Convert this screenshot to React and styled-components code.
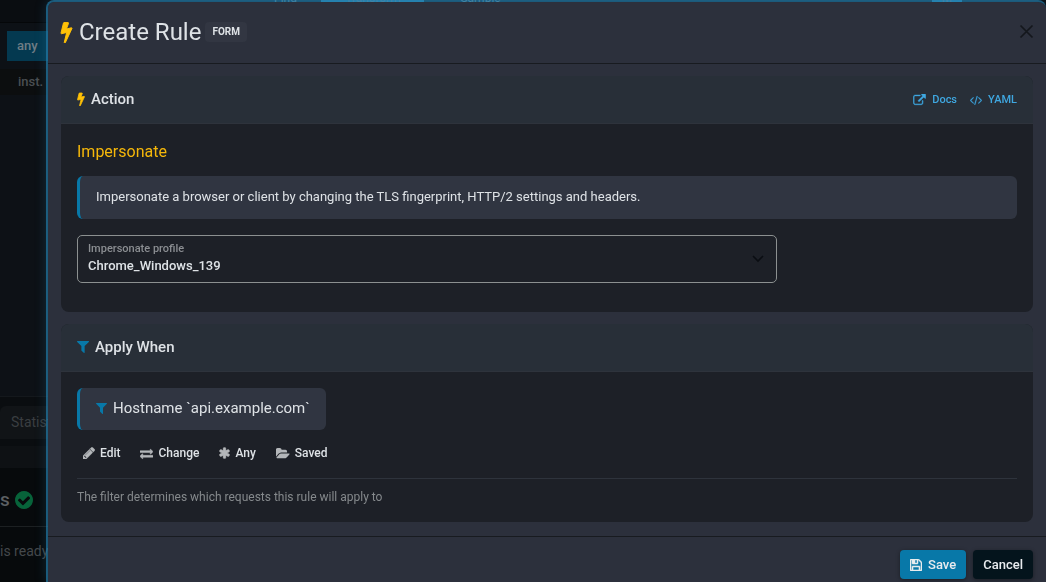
import styled, { createGlobalStyle } from "styled-components"

const GlobalStyle=createGlobalStyle`
  *{
    box-sizing:border-box;
  }
  body{
    margin:0;
    background:#0d1116;
    font-family:Roboto, "Liberation Sans", sans-serif;
    font-size:13px;
    line-height:20px;
    color:#dee2e6;
    overflow:hidden;
  }
  h1, h2, h3, p{
    margin:0;
    font-weight:500;
  }
`

/* page under the dialog */
const Page=styled.div`
  min-height:100vh;
  display:flex;
  flex-direction:column;
  background:#0d1116;
  color:#4a4e52;
  white-space:nowrap;
  overflow:hidden;
`
const TopBar=styled.div`
  height:23px;
  border-bottom:1px solid #050709;
  background:#0a0d11;
`
const Menu=styled.div`
  display:flex;
  gap:14px;
  padding:0 84px 0 264px;
  height:4px;
  align-items:flex-end;
  font-size:12px;
  line-height:12px;
  color:#8a949c;
`
const MenuItem=styled.span`
  padding:0 ${props=>props.px || '10px'};
  margin-left:${props=>props.end ? 'auto' : '0'};
  background:${props=>props.bg || 'transparent'};
  color:${props=>props.cl || 'inherit'};
`
const TabRow=styled.div`
  padding:8px 0 8px 7px;
  display:flex;
`
const Tab=styled.button`
  width:60px;
  height:30px;
  padding:0 10px;
  border:none;
  background:#043950;
  color:#6f7d85;
  font:500 13px/30px Roboto, sans-serif;
  text-align:left;
`
const SubRow=styled.div`
  height:26px;
  padding-left:18px;
  background:#0c0e0f;
  font-weight:500;
  line-height:26px;
`
const ListArea=styled.div`
  height:302px;
  border-bottom:1px solid #14181c;
`
const StatRow=styled.div`
  height:49px;
  padding:9px 0 7px;
  background:#0a0d10;
`
const StatTab=styled.div`
  height:33px;
  padding-left:11px;
  border-radius:6px 0 0 0;
  background:#111417;
  font-size:14px;
  line-height:33px;
  color:#3a3e41;
`
const Strip=styled.div`
  height:22px;
  background:#0e1114;
`
const DoneRow=styled.div`
  height:59px;
  padding-top:6px;
  display:flex;
  align-items:center;
  gap:5px;
  border-bottom:1px solid #1c2022;
  background:#070a0c;
  font-size:19px;
  font-weight:500;
  color:#5b5f62;
`
const Ready=styled.p`
  flex:1;
  padding-top:14px;
  background:#070a0c;
  font-size:14px;
  font-weight:400;
  color:#44484b;
`

/* dialog */
const Dialog=styled.div`
  position:fixed;
  top:0;
  left:46px;
  right:0;
  bottom:0;
  display:flex;
  flex-direction:column;
  border:2px solid rgba(36, 124, 168, 0.7);
  border-right:none;
  border-bottom:none;
  border-radius:8px 8px 0 0;
  background:#2c303c;
  background-clip:padding-box;
  box-shadow:0 0 12px rgba(36, 124, 168, 0.25);
`
const Header=styled.header`
  height:62px;
  flex:none;
  display:flex;
  align-items:center;
  gap:4px;
  padding:0 12px 2px;
  border-bottom:1px solid #181b20;
`
const Title=styled.h1`
  display:flex;
  align-items:center;
  gap:6px;
  font-size:24px;
  font-weight:400;
  line-height:32px;
`
const Badge=styled.span`
  padding:0 7px;
  border-radius:4px;
  background:#323642;
  font-size:10px;
  font-weight:700;
  line-height:20px;
`
const Close=styled.button`
  margin-left:auto;
  padding:0;
  border:none;
  background:none;
  color:#14171c;
  display:flex;
`
const Body=styled.main`
  flex:1;
  display:flex;
  flex-direction:column;
  gap:12px;
  padding:12px 13px 14px;
`
const Card=styled.section`
  border-radius:8px;
  background:#1d2027;
  overflow:hidden;
`
const CardHead=styled.div`
  height:48px;
  display:flex;
  align-items:center;
  justify-content:space-between;
  padding:0 16px;
  border-bottom:1px solid #2e333c;
  background:#282f38;
`
const CardTitle=styled.h2`
  display:flex;
  align-items:center;
  gap:6px;
  padding-bottom:2px;
  font-size:15px;
`
const Links=styled.nav`
  display:flex;
  gap:13px;
`
const DocLink=styled.a`
  display:flex;
  align-items:center;
  gap:6px;
  color:#3fa7e0;
  font-size:11px;
  font-weight:500;
  text-decoration:none;
`
const CardBody=styled.div`
  padding:16px 16px ${props=>props.pb};
`
const ActionName=styled.h3`
  padding-top:1px;
  margin-bottom:13px;
  color:#f5b70a;
  font-size:16px;
  font-weight:400;
  line-height:22px;
`
const Note=styled.p`
  padding:11px 16px 12px;
  border-left:3px solid #0878a8;
  border-radius:6px;
  background:#303541;
  font-size:13px;
  font-weight:400;
  line-height:20px;
`
const Field=styled.div`
  position:relative;
  width:75%;
  max-width:700px;
  margin-top:16px;
`
const FieldLabel=styled.label`
  position:absolute;
  top:6px;
  left:11px;
  color:#8b8e92;
  font-size:11px;
  font-weight:500;
  line-height:16px;
`
const Select=styled.select`
  display:block;
  width:100%;
  height:48px;
  padding:14px 10px 0;
  appearance:none;
  border:1px solid #8c9090;
  border-radius:5px;
  background:transparent;
  color:#dee2e6;
  font:500 13px/20px Roboto, sans-serif;
`
const Arrow=styled.svg`
  position:absolute;
  top:18px;
  right:13px;
  pointer-events:none;
`
const Filter=styled.div`
  display:inline-flex;
  align-items:center;
  gap:6px;
  height:42px;
  padding:0 16px 2px;
  border-left:3px solid #0878a8;
  border-radius:6px;
  background:#303541;
  font-size:15px;
`
const Tools=styled.div`
  display:flex;
  gap:20px;
  padding:13px 6px 15px;
  border-bottom:1px solid #2e333c;
`
const Tool=styled.button`
  display:flex;
  align-items:center;
  gap:5px;
  padding:0;
  border:none;
  background:none;
  color:#dee2e6;
  font:500 12px/20px Roboto, sans-serif;
`
const Help=styled.p`
  padding-top:8px;
  color:#85898c;
  font-size:12px;
  font-weight:400;
`
const Footer=styled.footer`
  flex:none;
  display:flex;
  justify-content:flex-end;
  gap:7px;
  padding:13px 13px 3px;
  border-top:1px solid #181b20;
`
const Btn=styled.button`
  display:flex;
  align-items:center;
  gap:6px;
  height:29px;
  padding:0 10px;
  border:none;
  border-radius:4px;
  background:${props=>props.bg};
  color:#e9ecef;
  font:500 13px/29px Roboto, sans-serif;
  box-shadow:0 1px 4px rgba(0, 0, 0, 0.4);
`
const Svg=styled.svg`
  display:block;
  flex:none;
  color:${props=>props.color || 'inherit'};
  fill:currentColor;
  stroke:currentColor;
`

const paths={
  bolt:"M1333 566q18 20 7 44l-540 1157q-13 25-42 25-4 0-14-2-17-5-25.500-19t-4.500-30l197-808-406 101q-4 1-12 1-18 0-31-11-18-15-13-39l201-825q4-14 16-23t28-9h328q19 0 32 12.500t13 29.500q0 8-5 18l-171 463 396-98q8-2 12-2 19 0 34 15z",
  external:"M1408 928v320q0 119-84.500 203.500t-203.500 84.500h-832q-119 0-203.500-84.500t-84.500-203.500v-832q0-119 84.500-203.500t203.500-84.500h704q14 0 23 9t9 23v64q0 14-9 23t-23 9h-704q-66 0-113 47t-47 113v832q0 66 47 113t113 47h832q66 0 113-47t47-113v-320q0-14 9-23t23-9h64q14 0 23 9t9 23zm384-864v512q0 26-19 45t-45 19-45-19l-176-176-652 652q-10 10-23 10t-23-10l-114-114q-10-10-10-23t10-23l652-652-176-176q-19-19-19-45t19-45 45-19h512q26 0 45 19t19 45z",
  code:"M553 1399l-50 50q-10 10-23 10t-23-10l-466-466q-10-10-10-23t10-23l466-466q10-10 23-10t23 10l50 50q10 10 10 23t-10 23l-393 393 393 393q10 10 10 23t-10 23zm591-1067l-373 1291q-4 13-15.500 19.500t-23.500 2.500l-62-17q-13-4-19.500-15.500t-2.500-24.500l373-1291q4-13 15.500-19.500t23.500-2.500l62 17q13 4 19.500 15.500t2.500 24.500zm657 651l-466 466q-10 10-23 10t-23-10l-50-50q-10-10-10-23t10-23l393-393-393-393q-10-10-10-23t10-23l50-50q10-10 23-10t23 10l466 466q10 10 10 23t-10 23z",
  filter:"M1595 295q17 41-14 70l-493 493v742q0 42-39 59-13 5-25 5-27 0-45-19l-256-256q-19-19-19-45v-486l-493-493q-31-29-14-70 17-39 59-39h1280q42 0 59 39z",
  pencil:"M491 1536l91-91-235-235-91 91v107h128v128h107zm523-928q0-22-22-22-10 0-17 7l-542 542q-7 7-7 17 0 22 22 22 10 0 17-7l542-542q7-7 7-17zm-54-192l416 416-832 832h-416v-416zm683 96q0 53-37 90l-166 166-416-416 166-165q36-38 90-38 53 0 91 38l235 234q37 39 37 91z",
  exchange:"M1792 1184v192q0 13-9.500 22.500t-22.500 9.500h-1376v192q0 13-9.500 22.500t-22.500 9.500q-12 0-24-10l-319-320q-9-9-9-22 0-14 9-23l320-320q9-9 23-9 13 0 22.500 9.500t9.500 22.500v192h1376q13 0 22.500 9.500t9.500 22.500zm0-544q0 14-9 23l-320 320q-9 9-23 9-13 0-22.500-9.500t-9.500-22.500v-192h-1376q-13 0-22.500-9.500t-9.500-22.500v-192q0-13 9.500-22.500t22.500-9.500h1376v-192q0-14 9-23t23-9q12 0 24 10l319 319q9 9 9 23z",
  asterisk:"M1546 1050q46 26 59.500 77.500t-12.500 97.500l-64 110q-26 46-77.500 59.500t-97.500-12.500l-266-153v307q0 52-38 90t-90 38h-128q-52 0-90-38t-38-90v-307l-266 153q-46 26-97.500 12.500t-77.500-59.500l-64-110q-26-46-12.500-97.500t59.500-77.500l266-154-266-154q-46-26-59.500-77.500t12.500-97.500l64-110q26-46 77.500-59.500t97.500 12.500l266 153v-307q0-52 38-90t90-38h128q52 0 90 38t38 90v307l266-153q46-26 97.500-12.500t77.500 59.500l64 110q26 46 12.500 97.500t-59.500 77.500l-266 154z",
  folder:"M1815 952q0 31-31 66l-336 396q-43 51-120.500 86.500t-143.500 35.500h-1088q-34 0-60.500-13t-26.500-43q0-31 31-66l336-396q43-51 120.500-86.500t143.500-35.500h1088q34 0 60.500 13t26.500 43zm-343-344v160h-832q-94 0-197 47.500t-164 119.500l-337 396-5 6q0-4-.5-12.500t-.5-12.500v-960q0-92 66-158t158-66h320q92 0 158 66t66 158v32h544q92 0 158 66t66 158z",
  save:"M512 1536h768v-384h-768v384zm896 0h128v-896q0-14-10-38.500t-20-34.500l-281-281q-10-10-34-20t-39-10v416q0 40-28 68t-68 28h-576q-40 0-68-28t-28-68v-416h-128v1280h128v-416q0-40 28-68t68-28h832q40 0 68 28t28 68v416zm-384-928v-320q0-13-9.500-22.500t-22.500-9.500h-192q-13 0-22.500 9.500t-9.500 22.500v320q0 13 9.500 22.500t22.500 9.500h192q13 0 22.500-9.500t9.500-22.500zm640 32v928q0 40-28 68t-68 28h-1344q-40 0-68-28t-28-68v-1344q0-40 28-68t68-28h928q40 0 88 20t76 48l280 280q28 28 48 76t20 88z",
  check:"M1412 734q0-28-18-46l-91-90q-19-19-45-19t-45 19l-408 407-226-226q-19-19-45-19t-45 19l-91 90q-18 18-18 46 0 27 18 45l362 362q19 19 45 19 27 0 46-19l543-543q18-18 18-45zm252 162q0 209-103 385.500t-279.500 279.500-385.500 103-385.500-103-279.500-279.500-103-385.500 103-385.500 279.500-279.500 385.500-103 385.500 103 279.500 279.500 103 385.500z"
}

function Icon({name, w, h, box='0 0 1792 1792', color, bold=0}) {
  return (
    <Svg width={w} height={h} viewBox={box} color={color} strokeWidth={bold} aria-hidden="true">
      <path d={paths[name]} />
    </Svg>
  )
}

function Background() {
  return (
    <Page>
      <TopBar>
        <Menu>
          <MenuItem>Find</MenuItem>
          <MenuItem bg='#2b8fc0' px='24px'>Transform</MenuItem>
          <MenuItem px='22px'>Sample</MenuItem>
          <MenuItem end bg='#2b8fc0'>M</MenuItem>
        </Menu>
      </TopBar>
      <TabRow>
        <Tab>any</Tab>
      </TabRow>
      <SubRow>inst.</SubRow>
      <ListArea />
      <StatRow>
        <StatTab>Statistics</StatTab>
      </StatRow>
      <Strip />
      <DoneRow>
        s
        <Icon name='check' w={18} h={18} box='128 128 1536 1536' color='#07633a' />
      </DoneRow>
      <Ready>is ready</Ready>
    </Page>
  )
}

function App() {
  return (
    <div>
      <GlobalStyle />
      <Background />
      <Dialog role="dialog" aria-labelledby="title">
        <Header>
          <Title id="title">
            <Icon name='bolt' w={13} h={22} box='448 0 896 1792' color='#ffc107' bold={80} />
            Create Rule
          </Title>
          <Badge>FORM</Badge>
          <Close aria-label="Close">
            <svg width="15" height="15" viewBox="0 0 15 15" fill="none" stroke="currentColor" strokeWidth="1.7">
              <path d="M1.500 1.500l12 12M13.500 1.500l-12 12" />
            </svg>
          </Close>
        </Header>

        <Body>
          {/* Action card */}
          <Card>
            <CardHead>
              <CardTitle>
                <Icon name='bolt' w={8} h={14} box='448 0 896 1792' color='#ffc107' bold={100} />
                Action
              </CardTitle>
              <Links>
                <DocLink href="#docs">
                  <Icon name='external' w={13} h={12} box='-40 0 1872 1700' bold={60} />
                  Docs
                </DocLink>
                <DocLink href="#yaml">
                  <Icon name='code' w={12} h={12} box='-20 0 1832 1792' bold={40} />
                  YAML
                </DocLink>
              </Links>
            </CardHead>
            <CardBody pb='29px'>
              <ActionName>Impersonate</ActionName>
              <Note>Impersonate a browser or client by changing the TLS fingerprint, HTTP/2 settings and headers.</Note>
              <Field>
                <FieldLabel htmlFor="profile">Impersonate profile</FieldLabel>
                <Select id="profile">
                  <option>Chrome_Windows_139</option>
                </Select>
                <Arrow width="12" height="12" viewBox="0 0 12 12" fill="none" stroke="#0a0d12" strokeWidth="1.6">
                  <path d="M1 3l5 5 5-5" />
                </Arrow>
              </Field>
            </CardBody>
          </Card>

          {/* Filter card */}
          <Card>
            <CardHead>
              <CardTitle>
                <Icon name='filter' w={12} h={12} box='190 256 1410 1410' color='#0878a8' />
                Apply When
              </CardTitle>
            </CardHead>
            <CardBody pb='15px'>
              <Filter>
                <Icon name='filter' w={11} h={11} box='190 256 1410 1410' color='#0878a8' />
                Hostname `api.example.com`
              </Filter>
              <Tools>
                <Tool><Icon name='pencil' w={12} h={12} box='128 128 1536 1536' color='#b4b7ba' bold={50} />Edit</Tool>
                <Tool><Icon name='exchange' w={13} h={13} color='#b4b7ba' bold={70} />Change</Tool>
                <Tool><Icon name='asterisk' w={11} h={12} box='128 128 1536 1536' color='#b4b7ba' bold={50} />Any</Tool>
                <Tool><Icon name='folder' w={14} h={13} box='0 0 1820 1792' color='#b4b7ba' />Saved</Tool>
              </Tools>
              <Help>The filter determines which requests this rule will apply to</Help>
            </CardBody>
          </Card>
        </Body>

        <Footer>
          <Btn bg='#0878a8'>
            <Icon name='save' w={12} h={12} box='128 128 1536 1536' bold={70} />
            Save
          </Btn>
          <Btn bg='#04141c'>Cancel</Btn>
        </Footer>
      </Dialog>
    </div>
  )
}

export default App
